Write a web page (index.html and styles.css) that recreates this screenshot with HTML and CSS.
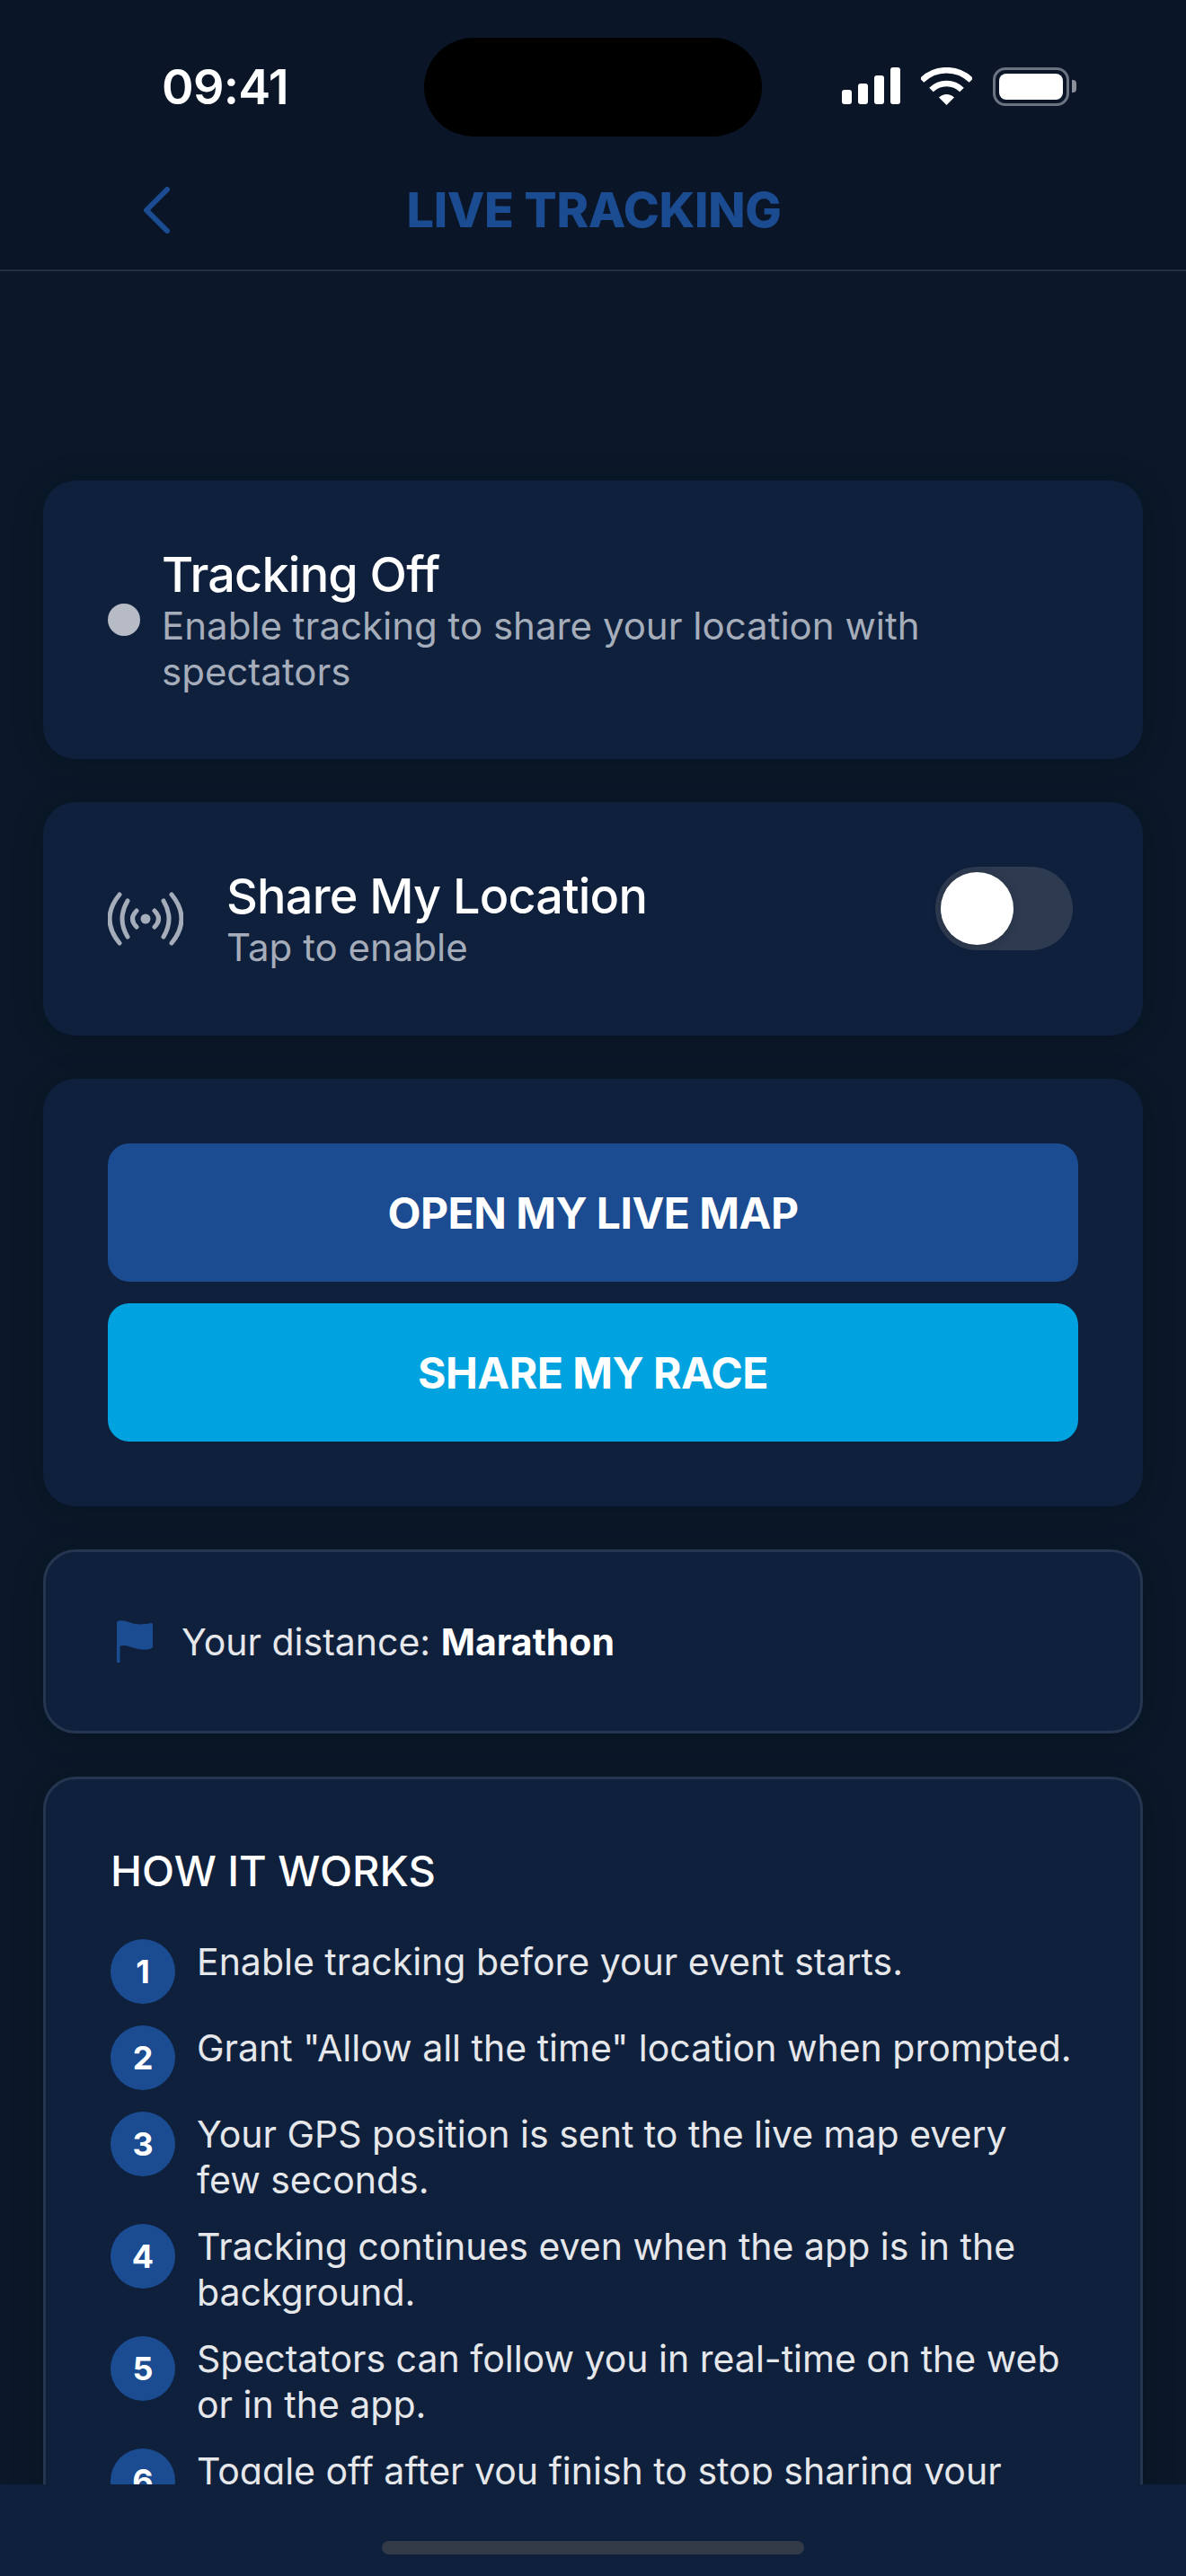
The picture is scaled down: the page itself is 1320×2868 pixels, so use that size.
FILE: index.html
```html
<!DOCTYPE html>
<html lang="en">
<head>
  <meta charset="UTF-8">
  <meta name="viewport" content="width=device-width, initial-scale=1.0">
  <title>Live Tracking</title>
  <link rel="stylesheet" href="styles.css">
</head>
<body>
  <div class="screen">
    <header class="top">
      <div class="status">
        <div class="time">09:41</div>
        <div class="island"></div>
        <div class="status-icons">
          <svg class="signal" width="66" height="42" viewBox="0 0 66 42" fill="#fff">
            <rect x="0" y="25" width="11" height="16" rx="3"/>
            <rect x="18" y="18" width="11" height="23" rx="3"/>
            <rect x="36" y="9" width="11" height="32" rx="3"/>
            <rect x="54" y="0" width="11" height="41" rx="3"/>
          </svg>
          <svg class="wifi" width="57" height="42" viewBox="0 0 57 42">
            <path d="M1 14.5A39 39 0 0 1 56 14.5" fill="none" stroke="#fff" stroke-width="6.5"/>
            <path d="M11.5 25A24 24 0 0 1 45.5 25" fill="none" stroke="#fff" stroke-width="6.5"/>
            <path d="M28.5 42L20 33.5A12 12 0 0 1 37 33.5Z" fill="#fff"/>
          </svg>
          <div class="battery"><div class="battery-fill"></div></div>
          <div class="battery-tip"></div>
        </div>
      </div>
      <div class="nav">
        <svg class="back" width="29" height="52" viewBox="0 0 29 52">
          <path d="M26 3L3 26L26 49" fill="none" stroke="#1b4b91" stroke-width="6" stroke-linecap="round" stroke-linejoin="round"/>
        </svg>
        <h1 class="page-title">LIVE TRACKING</h1>
      </div>
    </header>

    <main class="content">
      <section class="card row-card">
        <span class="dot"></span>
        <div class="status-text">
          <div class="card-title">Tracking Off</div>
          <div class="card-sub">Enable tracking to share your location with spectators</div>
        </div>
      </section>

      <section class="card share-card">
        <svg class="radio" width="84" height="60" viewBox="-42 -30 84 60">
          <circle r="5.5" fill="#a6adba"/>
          <g fill="none" stroke="#a6adba" stroke-width="5" stroke-linecap="round">
            <path d="M-10 -9Q-19 0 -10 9M10 -9Q19 0 10 9"/>
            <path d="M-20 -20Q-32 0 -20 20M20 -20Q32 0 20 20"/>
            <path d="M-29 -27Q-51 0 -29 27M29 -27Q51 0 29 27"/>
          </g>
        </svg>
        <div class="share-text">
          <div class="card-title">Share My Location</div>
          <div class="card-sub">Tap to enable</div>
        </div>
        <div class="toggle"><span class="thumb"></span></div>
      </section>

      <section class="card actions">
        <button class="btn btn-blue">OPEN MY LIVE MAP</button>
        <button class="btn btn-cyan">SHARE MY RACE</button>
      </section>

      <section class="card outlined distance">
        <svg class="flag" width="40" height="47" viewBox="0 0 40 47">
          <path d="M0 3Q0 1 2 .6Q6 -.4 12 1.500C20 4.500 26 5.500 38 3Q40 2.800 40 5V29Q40 31 38 31.500C28 34.500 20 31 12 28.500C8 27.500 5.500 28 3.500 29V47H0Z" fill="#1b4b91"/>
        </svg>
        <p class="distance-text">Your distance: <strong>Marathon</strong></p>
      </section>

      <section class="card outlined how">
        <h2 class="how-title">HOW IT WORKS</h2>
        <ol class="steps">
          <li><span class="num">1</span><span class="step-text">Enable tracking before your event starts.</span></li>
          <li><span class="num">2</span><span class="step-text">Grant "Allow all the time" location when prompted.</span></li>
          <li><span class="num">3</span><span class="step-text">Your GPS position is sent to the live map every few seconds.</span></li>
          <li><span class="num">4</span><span class="step-text">Tracking continues even when the app is in the background.</span></li>
          <li><span class="num">5</span><span class="step-text">Spectators can follow you in real-time on the web or in the app.</span></li>
          <li><span class="num">6</span><span class="step-text">Toggle off after you finish to stop sharing your location.</span></li>
        </ol>
      </section>
    </main>

    <div class="home-bar"><span class="home-indicator"></span></div>
  </div>
</body>
</html>
```

FILE: styles.css
```css
* {
  box-sizing: border-box;
}
body {
  margin: 0;
  background: #0a1628;
  font-family: Inter, "Noto Sans", sans-serif;
  color: #fff;
}
.screen {
  width: 1320px;
  height: 2868px;
  display: flex;
  flex-direction: column;
  overflow: hidden;
}

/* status bar + nav */
.top {
  height: 302px;
  flex: none;
  border-bottom: 2px solid #222e42;
}
.status {
  display: grid;
  grid-template-columns: 472px 376px 1fr;
  padding-top: 42px;
  height: 152px;
}
.time {
  padding-left: 180px;
  font-size: 54px;
  font-weight: 600;
  letter-spacing: -0.7px;
  line-height: 110px;
}
.island {
  background: #000;
  border-radius: 55px;
}
.status-icons {
  display: flex;
  align-items: flex-start;
  padding: 33px 0 0 89px;
}
.wifi {
  margin-left: 22px;
}
.battery {
  margin-left: 23px;
  width: 85px;
  height: 43px;
  padding: 4px;
  border: 3px solid #6b7280;
  border-radius: 14px;
}
.battery-fill {
  height: 100%;
  background: #fff;
  border-radius: 8px;
}
.battery-tip {
  margin: 14px 0 0 3px;
  width: 5px;
  height: 14px;
  background: #8b919c;
  border-radius: 0 4px 4px 0;
}
.nav {
  display: grid;
  grid-template-columns: 1fr auto 1fr;
  align-items: center;
  height: 148px;
  padding: 16px 0 0 160px;
}
.page-title {
  margin: 0 158px 0 0;
  font-size: 54px;
  font-weight: 800;
  letter-spacing: -0.3px;
  color: #1b4b91;
  line-height: 1;
}

/* scrolling part */
.content {
  flex: 1;
  min-height: 0;
  overflow: hidden;
  padding: 233px 48px 0;
  display: flex;
  flex-direction: column;
  gap: 48px;
  background: #0a1829;
}
.card {
  flex: none;
  background: #0e203c;
  border-radius: 36px;
  box-shadow: 0 4px 36px rgba(0, 0, 0, 0.2);
}
.outlined {
  border: 3px solid #263650;
}
.row-card {
  height: 310px;
  padding: 0 72px;
  display: flex;
  align-items: center;
  gap: 24px;
}
.dot {
  flex: none;
  width: 36px;
  height: 36px;
  border-radius: 50%;
  background: #b6bbc6;
}
.status-text {
  padding-top: 2px;
}
.card-title {
  font-size: 54px;
  font-weight: 500;
  letter-spacing: -0.8px;
  line-height: 62px;
}
.card-sub {
  font-size: 42px;
  line-height: 51px;
  color: #a6adba;
}
.share-card {
  height: 260px;
  padding: 0 78px 0 72px;
  display: flex;
  align-items: center;
}
.radio {
  flex: none;
}
.share-text {
  flex: 1;
  margin-left: 48px;
}
.toggle {
  flex: none;
  width: 153px;
  height: 93px;
  padding: 6px;
  margin-bottom: 23px;
  background: #2e3a50;
  border-radius: 47px;
}
.thumb {
  display: block;
  width: 81px;
  height: 81px;
  background: #fff;
  border-radius: 50%;
  box-shadow: 0 2px 12px rgba(0, 0, 0, 0.15);
}
.actions {
  padding: 72px;
  display: flex;
  flex-direction: column;
  gap: 24px;
}
.btn {
  height: 154px;
  border: none;
  border-radius: 24px;
  font-family: inherit;
  font-size: 48px;
  font-weight: 700;
  letter-spacing: -0.5px;
  color: #fff;
}
.btn-blue {
  background: #1b4b91;
}
.btn-cyan {
  background: #00a3e0;
}
.distance {
  height: 205px;
  padding: 0 72px 0 79px;
  display: flex;
  align-items: center;
  gap: 32px;
}
.flag {
  flex: none;
}
.distance-text {
  margin: 0;
  font-size: 41px;
  color: #e5e7eb;
}
.distance-text strong {
  font-weight: 700;
  color: #fff;
}
.how {
  padding: 72px;
}
.how-title {
  margin: 0 0 46px;
  font-size: 47px;
  font-weight: 500;
  line-height: 60px;
}
.steps {
  margin: 0;
  padding: 0;
  list-style: none;
  display: flex;
  flex-direction: column;
  gap: 24px;
}
.steps li {
  display: flex;
  gap: 24px;
}
.num {
  flex: none;
  width: 72px;
  height: 72px;
  border-radius: 50%;
  background: #1b4b91;
  font-size: 36px;
  font-weight: 700;
  line-height: 72px;
  text-align: center;
}
.step-text {
  font-size: 41px;
  line-height: 50.5px;
  color: #e5e7eb;
}
.home-bar {
  flex: none;
  height: 102px;
  background: #0e203c;
  display: flex;
  justify-content: center;
  padding-top: 63px;
}
.home-indicator {
  width: 470px;
  height: 15px;
  border-radius: 8px;
  background: #333a48;
}
```
